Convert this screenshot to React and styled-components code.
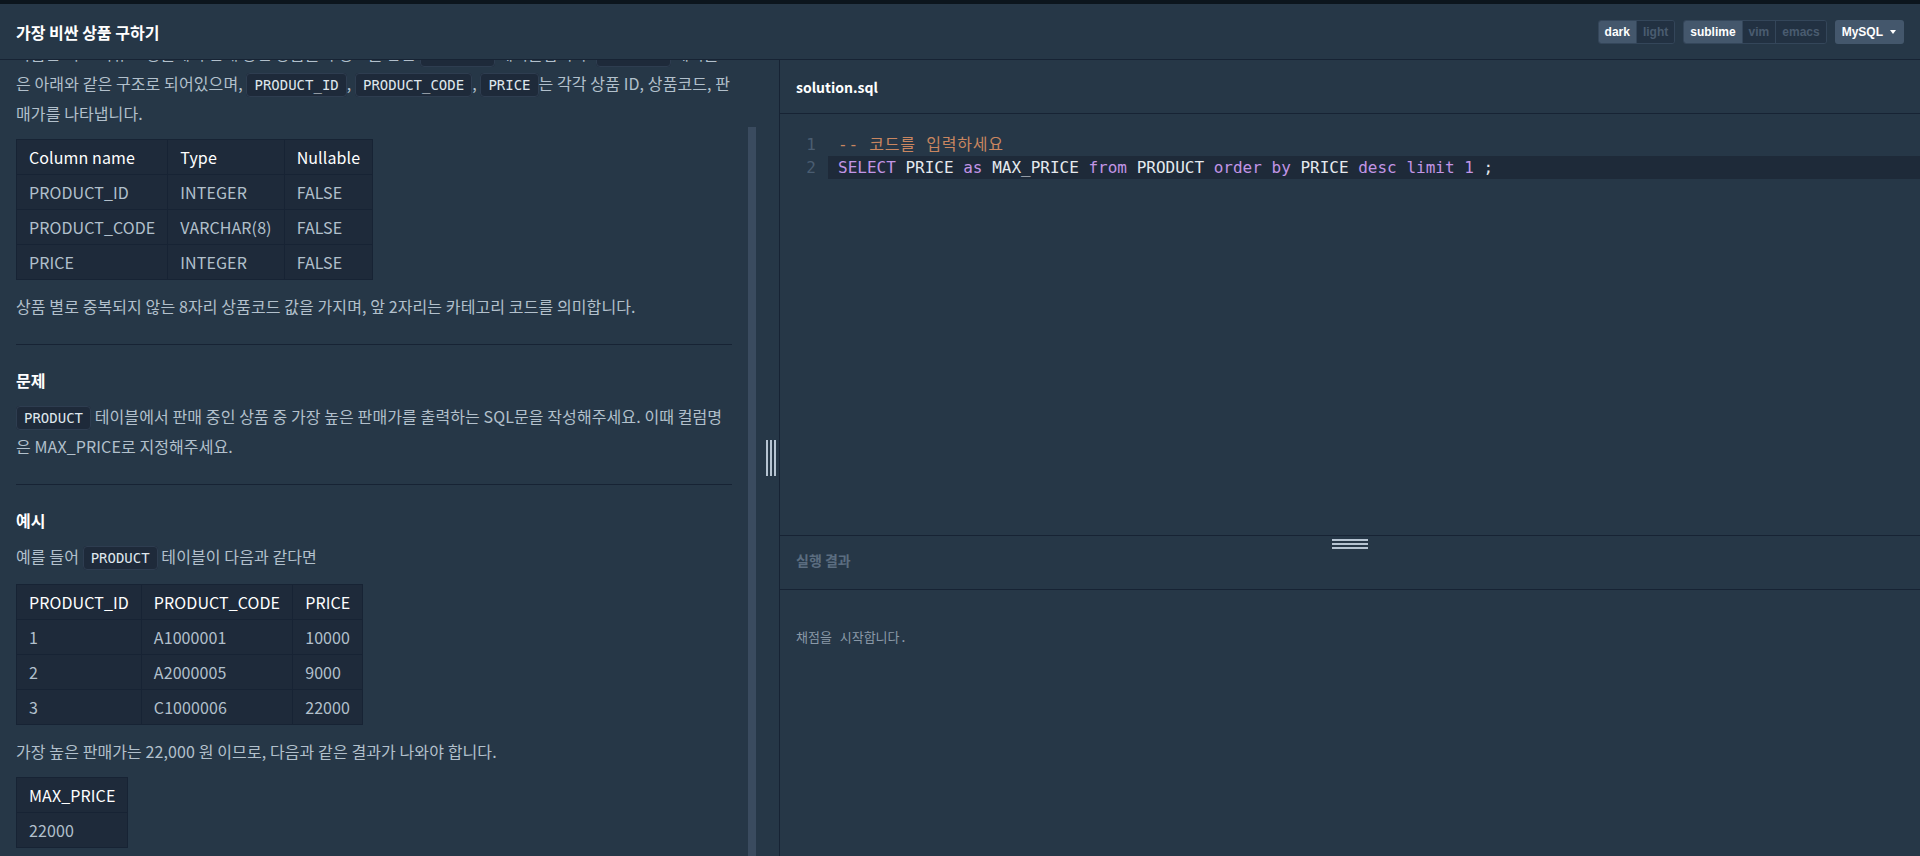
import React, { useLayoutEffect, useRef, useState } from "react";
import styled, { createGlobalStyle } from "styled-components";

const GlobalStyle = createGlobalStyle`
  * { box-sizing: border-box; }
  html, body { margin: 0; padding: 0; height: 100%; background: #263747; }
  body {
    font-family: "Noto Sans CJK KR", "Noto Sans", sans-serif;
    color: #b2c0cc;
    overflow: hidden;
  }
  #root { height: 100%; }
`;

const Page = styled.div`
  height: 100vh;
  display: flex;
  flex-direction: column;
  border-top: 4px solid #0c151d;
`;

const Header = styled.header`
  flex: none;
  height: 56px;
  padding: 0 16px;
  display: flex;
  align-items: center;
  justify-content: space-between;
  border-bottom: 1px solid #172334;
`;

const Title = styled.h1`
  margin: 0;
  font-size: 16px;
  font-weight: 700;
  color: #fff;
`;

const Controls = styled.div`
  display: flex;
  align-items: center;
  gap: 8px;
`;

const Group = styled.div`
  display: inline-flex;
  height: 24px;
  border: 1px solid #34465a;
  border-radius: 3px;
  overflow: hidden;
`;

const Seg = styled.span`
  padding: 0 6px;
  line-height: 22px;
  font-family: "Liberation Sans", Arial, sans-serif;
  font-size: 12px;
  font-weight: 700;
  color: ${(p) => (p.$active ? "#fff" : "#4a5c70")};
  background: ${(p) => (p.$active ? "#44576c" : "#223142")};
  & + & {
    border-left: 1px solid ${(p) => (p.$active ? "#44576c" : "#34465a")};
  }
`;

const LangButton = styled.div`
  display: inline-flex;
  align-items: center;
  gap: 7px;
  height: 24px;
  padding: 0 8px 0 7px;
  border-radius: 3px;
  background: #44576c;
  color: #fff;
  font-family: "Liberation Sans", Arial, sans-serif;
  font-size: 12px;
  font-weight: 700;
`;

const Caret = styled.span`
  width: 0;
  height: 0;
  border-left: 3px solid transparent;
  border-right: 3px solid transparent;
  border-top: 4px solid #fff;
`;

const Main = styled.div`
  flex: 1;
  min-height: 0;
  display: flex;
`;

const DescPanel = styled.div`
  flex: none;
  width: 760px;
  display: flex;
`;

const Description = styled.div`
  flex: 1;
  min-width: 0;
  overflow-y: auto;
  scrollbar-width: none;
  &::-webkit-scrollbar { display: none; }
`;

const Track = styled.div`
  flex: none;
  width: 12px;
  padding-right: 4px;
`;

const Thumb = styled.div`
  background: #3a4b5f;
`;

const Article = styled.div`
  padding: 16px 16px 8px;
  font-size: 16px;
  line-height: 28px;
  letter-spacing: 0.1px;
`;

const Heading = styled.h5`
  margin: 0 0 8px;
  font-size: 16px;
  line-height: 28px;
  font-weight: 700;
  color: #fff;
`;

const Para = styled.p`
  margin: 0 0 12px;
`;

const Chip = styled.code`
  font-family: "DejaVu Sans Mono", "Noto Sans CJK KR", monospace;
  font-size: 14px;
  letter-spacing: 0;
  padding: 3px 7px;
  border-radius: 4px;
  background: #1e2a3a;
  border: 1px solid #2e3d50;
  color: #dfe6ec;
`;

const Rule = styled.hr`
  border: 0;
  border-top: 1px solid #172334;
  margin: 24px 0 21px;
`;

const Table = styled.table`
  border-collapse: collapse;
  margin: 12px 0;
  background: #1e2a3a;
  &:last-child { margin-bottom: 0; }
  th, td {
    border: 1px solid #172334;
    padding: 5px 12px;
    line-height: 24px;
    text-align: left;
    font-weight: 400;
    white-space: nowrap;
  }
  th { color: #fff; }
  td { color: #b2c0cc; }
`;

const Gutter = styled.div`
  flex: none;
  width: 19px;
  padding-left: 3px;
  display: flex;
  align-items: center;
  justify-content: center;
`;

const GripV = styled.div`
  width: 10px;
  height: 36px;
  background: repeating-linear-gradient(to right, #b6c4d2 0 2px, transparent 2px 4px);
`;

const Workspace = styled.div`
  flex: 1;
  min-width: 0;
  display: flex;
  flex-direction: column;
  border-left: 1px solid #172334;
`;

const EditorPane = styled.section`
  flex: 1;
  min-height: 0;
  display: flex;
  flex-direction: column;
`;

const PaneHeader = styled.div`
  flex: none;
  height: 54px;
  padding: 0 16px ${(p) => (p.$muted ? "6px" : "0")};
  display: flex;
  align-items: center;
  border-bottom: 1px solid #172334;
  font-size: 14px;
  font-weight: 700;
  color: ${(p) => (p.$muted ? "#5b6d80" : "#fff")};
`;

const CodeArea = styled.div`
  padding-top: 19px;
  font-family: "DejaVu Sans Mono", "Noto Sans CJK KR", monospace;
  font-size: 16px;
  line-height: 23px;
`;

const Line = styled.div`
  display: flex;
`;

const LineNo = styled.span`
  flex: none;
  width: 48px;
  padding-right: 12px;
  text-align: right;
  color: #4a5d71;
`;

const LineText = styled.span`
  flex: 1;
  padding-left: 10px;
  white-space: pre;
  color: #e4e9ee;
  background: ${(p) => (p.$active ? "#1e2a39" : "transparent")};
`;

const tokenColors = { kw: "#c295e6", num: "#c295e6", cm: "#c98660" };

const Tok = styled.span`
  color: ${(p) => tokenColors[p.$kind] || "#e4e9ee"};
  letter-spacing: ${(p) => (p.$kind === "cm" ? "0.8px" : "0")};
`;

const ResultPane = styled.section`
  flex: none;
  height: 321px;
  position: relative;
  border-top: 1px solid #172334;
`;

const GripH = styled.div`
  position: absolute;
  top: 3px;
  left: 50%;
  transform: translateX(-50%);
  width: 36px;
  height: 10px;
  background: repeating-linear-gradient(to bottom, #b6c4d2 0 2px, transparent 2px 4px);
`;

const Output = styled.div`
  padding: 38px 16px;
  font-family: "DejaVu Sans Mono", "Noto Sans CJK KR", monospace;
  font-size: 13px;
  line-height: 20px;
  color: #8a99a8;
`;

const schema = [
  ["PRODUCT_ID", "INTEGER", "FALSE"],
  ["PRODUCT_CODE", "VARCHAR(8)", "FALSE"],
  ["PRICE", "INTEGER", "FALSE"],
];

const sample = [
  ["1", "A1000001", "10000"],
  ["2", "A2000005", "9000"],
  ["3", "C1000006", "22000"],
];

function DataTable({ head, rows }) {
  return (
    <Table>
      <thead>
        <tr>
          {head.map((h) => (
            <th key={h}>{h}</th>
          ))}
        </tr>
      </thead>
      <tbody>
        {rows.map((r, i) => (
          <tr key={i}>
            {r.map((c, j) => (
              <td key={j}>{c}</td>
            ))}
          </tr>
        ))}
      </tbody>
    </Table>
  );
}

export default function App() {
  const descRef = useRef(null);
  const [thumb, setThumb] = useState({ top: 0, height: 0 });

  useLayoutEffect(() => {
    // the description is shown scrolled to its end
    const el = descRef.current;
    if (!el) return;
    el.scrollTop = el.scrollHeight;
    const ratio = el.clientHeight / el.scrollHeight;
    setThumb({ top: el.scrollTop * ratio, height: el.clientHeight * ratio });
  }, []);

  return (
    <>
      <GlobalStyle />
      <Page>
        <Header>
          <Title>가장 비싼 상품 구하기</Title>
          <Controls>
            <Group>
              <Seg $active>dark</Seg>
              <Seg>light</Seg>
            </Group>
            <Group>
              <Seg $active>sublime</Seg>
              <Seg>vim</Seg>
              <Seg>emacs</Seg>
            </Group>
            <LangButton>
              MySQL <Caret />
            </LangButton>
          </Controls>
        </Header>

        <Main>
          <DescPanel>
            <Description ref={descRef}>
              <Article>
                <Heading>문제 설명</Heading>
                <Para>
                  다음은 어느 의류 쇼핑몰에서 판매 중인 상품들의 정보를 담은 <Chip>PRODUCT</Chip> 테이블입니다.{" "}
                  <Chip>PRODUCT</Chip> 테이블은 아래와 같은 구조로 되어있으며, <Chip>PRODUCT_ID</Chip>,{" "}
                  <Chip>PRODUCT_CODE</Chip>, <Chip>PRICE</Chip>는 각각 상품 ID, 상품코드, 판매가를 나타냅니다.
                </Para>
                <DataTable head={["Column name", "Type", "Nullable"]} rows={schema} />
                <Para>상품 별로 중복되지 않는 8자리 상품코드 값을 가지며, 앞 2자리는 카테고리 코드를 의미합니다.</Para>
                <Rule />
                <Heading>문제</Heading>
                <Para>
                  <Chip>PRODUCT</Chip> 테이블에서 판매 중인 상품 중 가장 높은 판매가를 출력하는 SQL문을
                  작성해주세요. 이때 컬럼명은 MAX_PRICE로 지정해주세요.
                </Para>
                <Rule />
                <Heading>예시</Heading>
                <Para>
                  예를 들어 <Chip>PRODUCT</Chip> 테이블이 다음과 같다면
                </Para>
                <DataTable head={["PRODUCT_ID", "PRODUCT_CODE", "PRICE"]} rows={sample} />
                <Para>가장 높은 판매가는 22,000 원 이므로, 다음과 같은 결과가 나와야 합니다.</Para>
                <DataTable head={["MAX_PRICE"]} rows={[["22000"]]} />
              </Article>
            </Description>
            <Track>
              <Thumb style={{ marginTop: thumb.top, height: thumb.height }} />
            </Track>
          </DescPanel>

          <Gutter>
            <GripV />
          </Gutter>

          <Workspace>
            <EditorPane>
              <PaneHeader>solution.sql</PaneHeader>
              <CodeArea>
                <Line>
                  <LineNo>1</LineNo>
                  <LineText>
                    <Tok $kind="cm">-- 코드를 입력하세요</Tok>
                  </LineText>
                </Line>
                <Line>
                  <LineNo>2</LineNo>
                  <LineText $active>
                    <Tok $kind="kw">SELECT</Tok> PRICE <Tok $kind="kw">as</Tok> MAX_PRICE <Tok $kind="kw">from</Tok>{" "}
                    PRODUCT <Tok $kind="kw">order</Tok> <Tok $kind="kw">by</Tok> PRICE <Tok $kind="kw">desc</Tok>{" "}
                    <Tok $kind="kw">limit</Tok> <Tok $kind="num">1</Tok> ;
                  </LineText>
                </Line>
              </CodeArea>
            </EditorPane>

            <ResultPane>
              <GripH />
              <PaneHeader $muted>실행 결과</PaneHeader>
              <Output>채점을 시작합니다.</Output>
            </ResultPane>
          </Workspace>
        </Main>
      </Page>
    </>
  );
}
